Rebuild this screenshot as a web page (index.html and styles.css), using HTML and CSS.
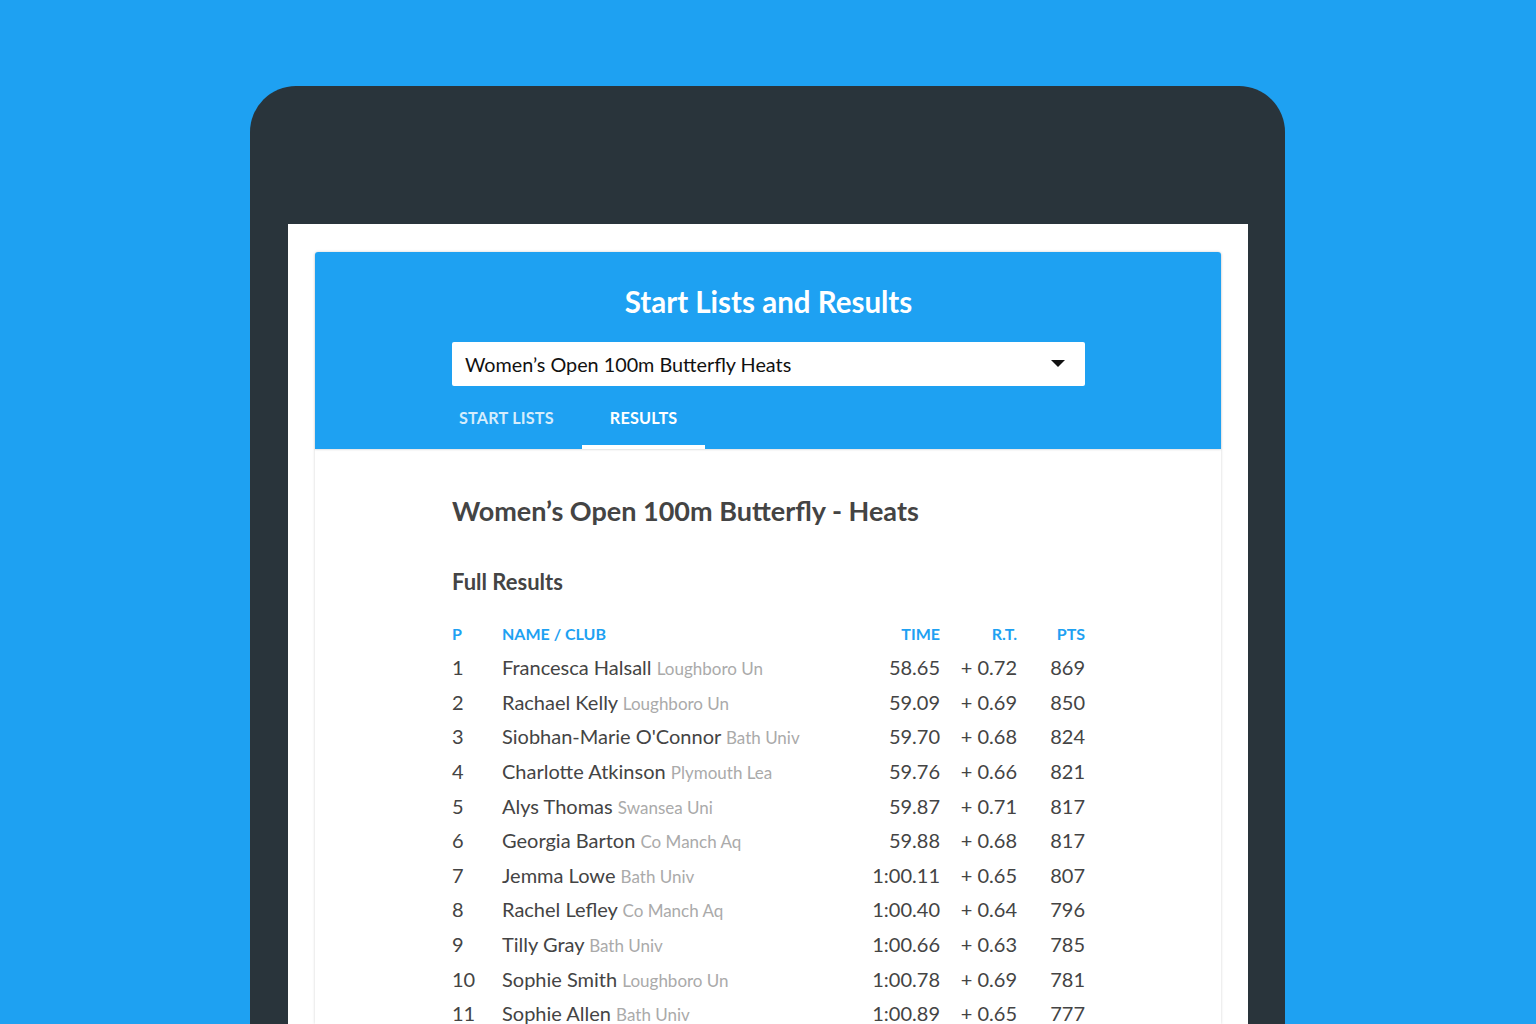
FILE: index.html
```html
<!DOCTYPE html>
<html lang="en">
<head>
<meta charset="utf-8">
<title>Start Lists and Results</title>
<link rel="stylesheet" href="styles.css">
</head>
<body>
<div class="device">
  <div class="screen">
    <div class="card">
      <header class="card-header">
        <h1 class="app-title">Start Lists and Results</h1>
        <div class="select">
          <span class="select-text">Women’s Open 100m Butterfly Heats</span>
          <svg class="caret" width="14" height="8" viewBox="0 0 14 8"><path d="M0 0 L14 0 L7 7 Z" fill="#111"/></svg>
        </div>
        <nav class="tabs">
          <div class="tab">START LISTS</div>
          <div class="tab active">RESULTS</div>
        </nav>
      </header>
      <main class="content">
        <h2 class="event-title">Women’s Open 100m Butterfly - Heats</h2>
        <h3 class="section-title">Full Results</h3>
        <div class="results">
          <div class="row head"><span>P</span><span>NAME / CLUB</span><span class="num">TIME</span><span class="num">R.T.</span><span class="num">PTS</span></div>
          <div class="row"><span>1</span><span>Francesca Halsall <em>Loughboro Un</em></span><span class="num">58.65</span><span class="num">+ 0.72</span><span class="num">869</span></div>
          <div class="row"><span>2</span><span>Rachael Kelly <em>Loughboro Un</em></span><span class="num">59.09</span><span class="num">+ 0.69</span><span class="num">850</span></div>
          <div class="row"><span>3</span><span>Siobhan-Marie O'Connor <em>Bath Univ</em></span><span class="num">59.70</span><span class="num">+ 0.68</span><span class="num">824</span></div>
          <div class="row"><span>4</span><span>Charlotte Atkinson <em>Plymouth Lea</em></span><span class="num">59.76</span><span class="num">+ 0.66</span><span class="num">821</span></div>
          <div class="row"><span>5</span><span>Alys Thomas <em>Swansea Uni</em></span><span class="num">59.87</span><span class="num">+ 0.71</span><span class="num">817</span></div>
          <div class="row"><span>6</span><span>Georgia Barton <em>Co Manch Aq</em></span><span class="num">59.88</span><span class="num">+ 0.68</span><span class="num">817</span></div>
          <div class="row"><span>7</span><span>Jemma Lowe <em>Bath Univ</em></span><span class="num">1:00.11</span><span class="num">+ 0.65</span><span class="num">807</span></div>
          <div class="row"><span>8</span><span>Rachel Lefley <em>Co Manch Aq</em></span><span class="num">1:00.40</span><span class="num">+ 0.64</span><span class="num">796</span></div>
          <div class="row"><span>9</span><span>Tilly Gray <em>Bath Univ</em></span><span class="num">1:00.66</span><span class="num">+ 0.63</span><span class="num">785</span></div>
          <div class="row"><span>10</span><span>Sophie Smith <em>Loughboro Un</em></span><span class="num">1:00.78</span><span class="num">+ 0.69</span><span class="num">781</span></div>
          <div class="row"><span>11</span><span>Sophie Allen <em>Bath Univ</em></span><span class="num">1:00.89</span><span class="num">+ 0.65</span><span class="num">777</span></div>
        </div>
      </main>
    </div>
  </div>
</div>
</body>
</html>
```
FILE: styles.css
```css
html, body {
  margin: 0;
  padding: 0;
}
body {
  background: #1ea1f2;
  height: 1024px;
  overflow: hidden;
  font-family: Lato, "Open Sans", sans-serif;
}
.device {
  box-sizing: border-box;
  width: 1035px;
  height: 938px;
  margin: 86px 0 0 250px;
  padding: 138px 37px 0 38px;
  background: #29343b;
  border-radius: 46px 46px 0 0;
}
.screen {
  box-sizing: border-box;
  height: 100%;
  background: #fff;
  padding: 28px 27px 0 27px;
}
.card {
  height: 100%;
  background: #fff;
  border-radius: 3px 3px 0 0;
  box-shadow: 0 0 3px rgba(0, 0, 0, 0.18);
}
.card-header {
  box-sizing: border-box;
  height: 197px;
  background: #1ea1f2;
  border-radius: 3px 3px 0 0;
  padding: 32px 136px 0 137px;
  box-shadow: 0 1px 2px rgba(0, 0, 0, 0.12);
  position: relative;
}
.app-title {
  margin: 0;
  text-align: center;
  color: #fff;
  font-size: 29.5px;
  line-height: 36px;
  font-weight: 700;
}
.select {
  margin-top: 22px;
  height: 44px;
  background: #fff;
  border-radius: 2px;
  display: flex;
  align-items: center;
  justify-content: space-between;
  padding: 0 20px 0 13px;
}
.select-text {
  font-size: 19.8px;
  color: #111;
}
.caret {
  display: block;
}
.tabs {
  display: flex;
  margin: 15px 0 0 -21px;
}
.tab {
  box-sizing: border-box;
  height: 48px;
  padding: 0 28px 15px;
  display: flex;
  align-items: center;
  font-size: 16.2px;
  font-weight: 700;
  color: rgba(255, 255, 255, 0.82);
  letter-spacing: 0.2px;
}
.tab.active {
  color: #fff;
  box-shadow: inset 0 -4px 0 #fff;
}
.content {
  padding: 44px 136px 0 137px;
  color: #444;
}
.event-title {
  margin: 0;
  font-size: 27px;
  line-height: 36px;
  font-weight: 700;
}
.section-title {
  margin: 39px 0 0;
  font-size: 22px;
  line-height: 28px;
  font-weight: 700;
}
.results {
  margin-top: 20px;
}
.row {
  display: grid;
  grid-template-columns: 50px 1fr 90px 77px 68px;
  height: 34.6px;
  align-items: center;
  font-size: 20px;
  color: #444;
}
.row.head {
  height: 34px;
  font-size: 16px;
  font-weight: 700;
  color: #1ea1f2;
}
.row em {
  font-style: normal;
  font-size: 17px;
  color: #aaa;
}
.num {
  text-align: right;
}
```
